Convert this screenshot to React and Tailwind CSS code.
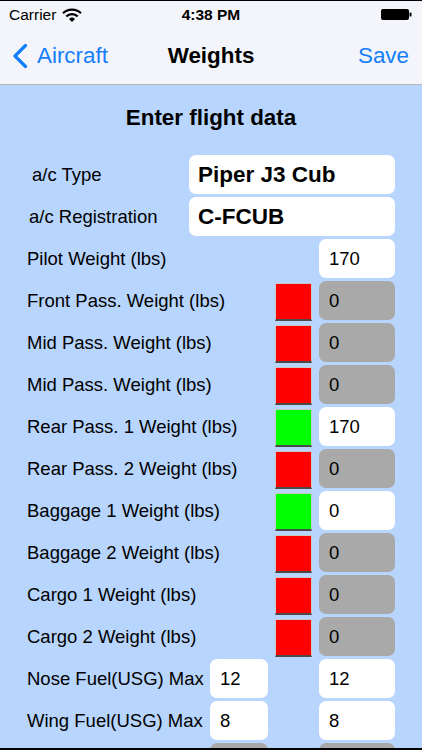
import React from 'react';

const font = { fontFamily: '"Liberation Sans", Arial, sans-serif' };

const people = [
    { label: 'Front Pass. Weight (lbs)', on: false, value: '0' },
    { label: 'Mid Pass. Weight (lbs)', on: false, value: '0' },
    { label: 'Mid Pass. Weight (lbs)', on: false, value: '0' },
    { label: 'Rear Pass. 1 Weight (lbs)', on: true, value: '170' },
    { label: 'Rear Pass. 2 Weight (lbs)', on: false, value: '0' },
    { label: 'Baggage 1 Weight (lbs)', on: true, value: '0' },
    { label: 'Baggage 2 Weight (lbs)', on: false, value: '0' },
    { label: 'Cargo 1 Weight (lbs)', on: false, value: '0' },
    { label: 'Cargo 2 Weight (lbs)', on: false, value: '0' },
];

const Field = ({ value, disabled, className = '' }) => (
    <div
        className={`h-[39px] rounded-[7px] flex items-center pl-[10px] text-[18.5px] text-black ${disabled ? 'bg-[#a9a9a9]' : 'bg-white'} ${className}`}
    >
        {value}
    </div>
);

const Toggle = ({ on }) => (
    <div
        className={`w-[37px] h-[38px] mt-[2px] self-start border border-[#c8c8c8] border-b-2 border-b-[#4a4a4a] ${on ? 'bg-[#00ff00]' : 'bg-[#ff0000]'}`}
    />
);

const Row = ({ children }) => (
    <div className="h-[39px] flex items-center pl-[27px] pr-[27px]">{children}</div>
);

export default function App() {
    return (
        <div style={font} className="w-[422px] h-[750px] flex flex-col overflow-hidden bg-black">
            <div className="h-[1px] bg-black" />

            {/* Status bar */}
            <div className="h-[27px] bg-[#f3f5fa] flex items-center justify-between pl-[9px] pr-[10px] text-[15.5px] text-black">
                <div className="flex items-center gap-[6px]">
                    <span>Carrier</span>
                    <svg width="20" height="14" viewBox="0 0 20 14">
                        <path d="M1 5.2 A13 13 0 0 1 19 5.2" fill="none" stroke="#000" strokeWidth="2.2" />
                        <path d="M4.3 8.4 A8.3 8.3 0 0 1 15.7 8.4" fill="none" stroke="#000" strokeWidth="2.2" />
                        <path d="M7 11 L10 14 L13 11 A4.3 4.3 0 0 0 7 11 Z" fill="#000" />
                    </svg>
                </div>
                <span className="font-semibold absolute left-1/2 -translate-x-1/2">4:38 PM</span>
                <svg width="31" height="11" viewBox="0 0 31 11">
                    <rect x="0" y="0" width="28" height="11" rx="2" fill="#000" />
                    <rect x="28.5" y="3.5" width="2" height="4" rx="0.5" fill="#000" />
                </svg>
            </div>

            {/* Nav bar */}
            <div className="h-[57px] bg-[#f3f5fa] border-b border-[#b4b6ba] flex items-center justify-between pl-[12px] pr-[13px] text-[22.4px]">
                <div className="flex items-center gap-[9px] text-[#157efb]">
                    <svg width="16" height="24" viewBox="0 0 16 24">
                        <path d="M13.5 1.5 L3 12 L13.5 22.5" fill="none" stroke="#157efb" strokeWidth="3.2" strokeLinecap="round" strokeLinejoin="round" />
                    </svg>
                    <span>Aircraft</span>
                </div>
                <span className="font-bold text-black absolute left-1/2 -translate-x-1/2">Weights</span>
                <span className="text-[#157efb]">Save</span>
            </div>

            {/* Content */}
            <div className="flex-1 bg-[#b8d5fd] overflow-hidden">
                <div className="h-[70px] pt-[21px] text-center leading-[24px] text-[22.4px] font-bold text-black">
                    Enter flight data
                </div>

                <div className="flex flex-col gap-[3px]">
                    <Row>
                        <span className="flex-1 pl-[5px] text-[18.5px] text-black">a/c Type</span>
                        <div className="w-[206px] h-[39px] rounded-[7px] bg-white flex items-center pl-[9px] text-[22.5px] font-bold text-black">
                            Piper J3 Cub
                        </div>
                    </Row>
                    <Row>
                        <span className="flex-1 pl-[2px] text-[18.5px] text-black">a/c Registration</span>
                        <div className="w-[206px] h-[39px] rounded-[7px] bg-white flex items-center pl-[9px] text-[22.5px] font-bold text-black">
                            C-FCUB
                        </div>
                    </Row>
                    <Row>
                        <span className="flex-1 text-[18.5px] text-black">Pilot Weight (lbs)</span>
                        <Field value="170" className="w-[76px]" />
                    </Row>
                    {people.map((p, i) => (
                        <Row key={i}>
                            <span className="flex-1 text-[18.5px] text-black whitespace-nowrap">{p.label}</span>
                            <div className="flex gap-[7px] h-[39px]">
                                <Toggle on={p.on} />
                                <Field value={p.value} disabled={!p.on} className="w-[76px]" />
                            </div>
                        </Row>
                    ))}
                    <Row>
                        <span className="w-[183px] text-[18.5px] text-black whitespace-nowrap">Nose Fuel(USG) Max</span>
                        <Field value="12" className="w-[58px]" />
                        <div className="flex-1" />
                        <Field value="12" className="w-[76px]" />
                    </Row>
                    <Row>
                        <span className="w-[183px] text-[18.5px] text-black whitespace-nowrap">Wing Fuel(USG) Max</span>
                        <Field value="8" className="w-[58px]" />
                        <div className="flex-1" />
                        <Field value="8" className="w-[76px]" />
                    </Row>
                    <Row>
                        <div className="w-[183px]" />
                        <Field value="" disabled className="w-[58px]" />
                        <div className="flex-1" />
                        <Field value="" disabled className="w-[76px]" />
                    </Row>
                </div>
            </div>

            <div className="h-[2px] bg-black" />
        </div>
    );
}
